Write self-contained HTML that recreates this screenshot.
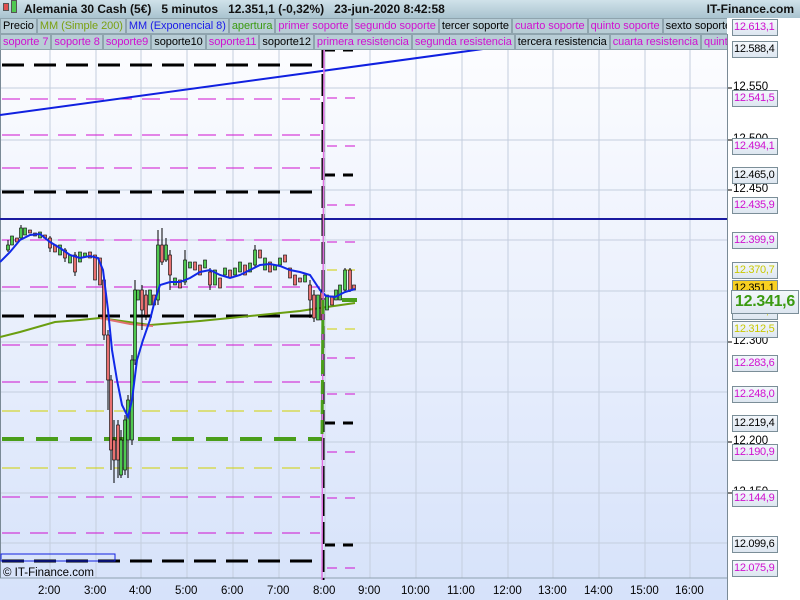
<!DOCTYPE html>
<html><head><meta charset="utf-8"><style>
*{margin:0;padding:0;box-sizing:border-box}
body{width:800px;height:600px;overflow:hidden;font-family:"Liberation Sans",sans-serif;background:#fff;position:relative}
#hdr{position:absolute;left:0;top:0;width:800px;height:18px;background:linear-gradient(#d0e2ea,#a9c3cf);font-size:12px;font-weight:bold;color:#111;line-height:18px}
.row{position:absolute;left:0;height:16px;width:727px;white-space:nowrap;overflow:hidden;font-size:11px;line-height:15px;letter-spacing:-0.05px}
.row span{display:inline-block;background:#b8cdd6;border:1px solid #8fa4ae;padding:0 2px;height:16px}
.lab{position:absolute;left:732px;width:46px;height:17px;border:1px solid #7b8e98;background:linear-gradient(#f4f8fc,#dde6f0);font-size:11px;line-height:15px;padding-left:1px;letter-spacing:-0.3px;white-space:nowrap;overflow:hidden}
.tk{position:absolute;left:733px;font-size:11.5px;color:#000}
.m{color:#d010d0}.y{color:#c8c800}.k{color:#000}
.t{position:absolute;top:585px;font-size:11.5px;color:#000}
</style></head><body>
<svg width="800" height="600" style="position:absolute;left:0;top:0">
<defs><linearGradient id="bg" x1="0" y1="0" x2="0" y2="1"><stop offset="0" stop-color="#fdfdff"/><stop offset="1" stop-color="#d6e2fa"/></linearGradient></defs>
<rect x="0" y="34" width="727" height="566" fill="url(#bg)"/>
<g stroke="#c4cede" stroke-width="1">
<line x1="50" y1="34" x2="50" y2="578"/><line x1="96" y1="34" x2="96" y2="578"/><line x1="141" y1="34" x2="141" y2="578"/><line x1="187" y1="34" x2="187" y2="578"/><line x1="233" y1="34" x2="233" y2="578"/><line x1="279" y1="34" x2="279" y2="578"/><line x1="325" y1="34" x2="325" y2="578"/><line x1="370" y1="34" x2="370" y2="578"/><line x1="416" y1="34" x2="416" y2="578"/><line x1="462" y1="34" x2="462" y2="578"/><line x1="508" y1="34" x2="508" y2="578"/><line x1="553" y1="34" x2="553" y2="578"/><line x1="599" y1="34" x2="599" y2="578"/><line x1="645" y1="34" x2="645" y2="578"/><line x1="690" y1="34" x2="690" y2="578"/>
<line x1="0" y1="88" x2="727" y2="88"/><line x1="0" y1="140" x2="727" y2="140"/><line x1="0" y1="190" x2="727" y2="190"/><line x1="0" y1="240" x2="727" y2="240"/><line x1="0" y1="291" x2="727" y2="291"/><line x1="0" y1="342" x2="727" y2="342"/><line x1="0" y1="392" x2="727" y2="392"/><line x1="0" y1="442" x2="727" y2="442"/><line x1="0" y1="493" x2="727" y2="493"/><line x1="0" y1="543" x2="727" y2="543"/>
</g>
<line x1="0" y1="578" x2="727" y2="578" stroke="#8fa0b0"/>
<line x1="727.5" y1="34" x2="727.5" y2="600" stroke="#7a8a96"/>
<line x1="0.5" y1="34" x2="0.5" y2="578" stroke="#7a8a96"/>
<g stroke="#d010d0" stroke-width="1" stroke-dasharray="18,10">
<line x1="2" y1="99" x2="320" y2="99"/><line x1="2" y1="135" x2="320" y2="135"/><line x1="2" y1="168" x2="320" y2="168"/><line x1="2" y1="240" x2="320" y2="240"/><line x1="2" y1="287" x2="320" y2="287"/><line x1="2" y1="345" x2="320" y2="345"/><line x1="2" y1="382" x2="320" y2="382"/><line x1="2" y1="497" x2="320" y2="497"/><line x1="2" y1="533" x2="320" y2="533"/>
</g>
<g stroke="#d0d000" stroke-width="1" stroke-dasharray="18,10"><line x1="2" y1="411" x2="320" y2="411"/><line x1="2" y1="468" x2="320" y2="468"/></g>
<g stroke="#000" stroke-width="3" stroke-dasharray="22,10"><line x1="2" y1="65" x2="320" y2="65"/><line x1="2" y1="192" x2="320" y2="192"/><line x1="2" y1="316" x2="320" y2="316"/><line x1="2" y1="561" x2="320" y2="561"/></g>
<line x1="2" y1="439" x2="322" y2="439" stroke="#4a9e1a" stroke-width="4" stroke-dasharray="22,12"/>
<g stroke="#d010d0" stroke-width="1" stroke-dasharray="10,8"><line x1="327" y1="98" x2="358" y2="98"/><line x1="327" y1="146" x2="358" y2="146"/><line x1="327" y1="205" x2="358" y2="205"/><line x1="327" y1="242" x2="358" y2="242"/><line x1="327" y1="358" x2="358" y2="358"/><line x1="327" y1="394" x2="358" y2="394"/><line x1="327" y1="452" x2="358" y2="452"/><line x1="327" y1="498" x2="358" y2="498"/><line x1="327" y1="568" x2="358" y2="568"/></g>
<g stroke="#d0d000" stroke-width="1" stroke-dasharray="10,8"><line x1="327" y1="270" x2="358" y2="270"/><line x1="327" y1="329" x2="358" y2="329"/></g>
<g stroke="#000" stroke-width="3" stroke-dasharray="10,8"><line x1="325" y1="50" x2="358" y2="50"/><line x1="325" y1="175" x2="358" y2="175"/><line x1="325" y1="423" x2="358" y2="423"/><line x1="325" y1="545" x2="358" y2="545"/></g>
<line x1="342" y1="300" x2="357" y2="300" stroke="#4a9e1a" stroke-width="4"/>
<line x1="0" y1="115" x2="505" y2="46" stroke="#1020e0" stroke-width="2"/>
<line x1="0" y1="219" x2="727" y2="219" stroke="#1a1aa0" stroke-width="2"/>
<rect x="1" y="554" width="114" height="7" fill="none" stroke="#1020e0"/>
<polyline fill="none" stroke="#6a9e10" stroke-width="2" points="0,337 20,332 55,322 80,320 100,318 150,325 200,321 250,316 300,311 320,308 355,303"/>
<polyline fill="none" stroke="#e07070" stroke-width="2" points="100,318 130,324 153,326"/>
<g stroke="#000" stroke-width="1">
<line x1="8" y1="240" x2="8" y2="252"/><line x1="21" y1="225" x2="21" y2="240"/><line x1="50" y1="236" x2="50" y2="252"/><line x1="65" y1="248" x2="65" y2="262"/><line x1="75" y1="252" x2="75" y2="276"/><line x1="104" y1="275" x2="104" y2="340"/><line x1="108" y1="330" x2="108" y2="410"/><line x1="111" y1="375" x2="111" y2="470"/><line x1="114" y1="420" x2="114" y2="483"/><line x1="118" y1="420" x2="118" y2="478"/><line x1="121" y1="430" x2="121" y2="478"/><line x1="125" y1="415" x2="125" y2="475"/><line x1="128" y1="395" x2="128" y2="478"/><line x1="132" y1="355" x2="132" y2="445"/><line x1="135" y1="280" x2="135" y2="365"/><line x1="142" y1="285" x2="142" y2="330"/><line x1="146" y1="290" x2="146" y2="320"/><line x1="158" y1="230" x2="158" y2="305"/><line x1="162" y1="228" x2="162" y2="265"/><line x1="166" y1="238" x2="166" y2="262"/><line x1="170" y1="250" x2="170" y2="290"/><line x1="185" y1="250" x2="185" y2="285"/><line x1="210" y1="268" x2="210" y2="290"/><line x1="255" y1="245" x2="255" y2="268"/><line x1="310" y1="280" x2="310" y2="318"/><line x1="314" y1="290" x2="314" y2="322"/><line x1="322" y1="285" x2="322" y2="330"/><line x1="345" y1="268" x2="345" y2="292"/><line x1="350" y1="268" x2="350" y2="292"/>
</g>
<g stroke="#000" stroke-width="0.6" fill="#4fc84f">
<rect x="6.5" y="245" width="3" height="5"/><rect x="10.5" y="236" width="3" height="9"/><rect x="19.5" y="228" width="3" height="10"/><rect x="23.5" y="228" width="3" height="7"/><rect x="38.5" y="232" width="3" height="6"/><rect x="58.5" y="245" width="3" height="10"/><rect x="68.5" y="255" width="3" height="8"/><rect x="78.5" y="252" width="3" height="10"/><rect x="83.5" y="253" width="3" height="4"/><rect x="119.5" y="440" width="3" height="35"/><rect x="123.5" y="420" width="3" height="50"/><rect x="126.5" y="400" width="3" height="40"/><rect x="130.5" y="360" width="3" height="80"/><rect x="133.5" y="290" width="3" height="70"/><rect x="136.5" y="290" width="3" height="10"/><rect x="148.5" y="290" width="3" height="15"/><rect x="156.5" y="245" width="3" height="55"/><rect x="164.5" y="245" width="3" height="15"/><rect x="173.5" y="278" width="3" height="7"/><rect x="183.5" y="260" width="3" height="22"/><rect x="188.5" y="262" width="3" height="6"/><rect x="203.5" y="260" width="3" height="8"/><rect x="213.5" y="270" width="3" height="15"/><rect x="223.5" y="268" width="3" height="7"/><rect x="233.5" y="268" width="3" height="7"/><rect x="238.5" y="262" width="3" height="10"/><rect x="248.5" y="263" width="3" height="9"/><rect x="253.5" y="250" width="3" height="15"/><rect x="263.5" y="258" width="3" height="12"/><rect x="273.5" y="265" width="3" height="5"/><rect x="278.5" y="258" width="3" height="7"/><rect x="303.5" y="275" width="3" height="7"/><rect x="316.5" y="295" width="3" height="25"/><rect x="325.5" y="295" width="3" height="15"/><rect x="334.5" y="290" width="3" height="10"/><rect x="338.5" y="285" width="3" height="15"/><rect x="343.5" y="270" width="3" height="20"/>
</g>
<g stroke="#000" stroke-width="0.6" fill="#e87070">
<rect x="15.5" y="238" width="3" height="4"/><rect x="28.5" y="230" width="3" height="3"/><rect x="33.5" y="233" width="3" height="3"/><rect x="43.5" y="235" width="3" height="3"/><rect x="48.5" y="238" width="3" height="10"/><rect x="53.5" y="245" width="3" height="7"/><rect x="63.5" y="250" width="3" height="8"/><rect x="73.5" y="255" width="3" height="17"/><rect x="88.5" y="252" width="3" height="6"/><rect x="93.5" y="255" width="3" height="25"/><rect x="98.5" y="258" width="3" height="27"/><rect x="102.5" y="280" width="3" height="55"/><rect x="106.5" y="335" width="3" height="45"/><rect x="109.5" y="380" width="3" height="70"/><rect x="112.5" y="440" width="3" height="20"/><rect x="116.5" y="425" width="3" height="35"/><rect x="140.5" y="290" width="3" height="20"/><rect x="144.5" y="295" width="3" height="20"/><rect x="152.5" y="295" width="3" height="10"/><rect x="160.5" y="245" width="3" height="17"/><rect x="168.5" y="255" width="3" height="20"/><rect x="178.5" y="280" width="3" height="8"/><rect x="193.5" y="262" width="3" height="8"/><rect x="198.5" y="265" width="3" height="10"/><rect x="208.5" y="272" width="3" height="13"/><rect x="218.5" y="278" width="3" height="10"/><rect x="228.5" y="270" width="3" height="8"/><rect x="243.5" y="265" width="3" height="10"/><rect x="258.5" y="250" width="3" height="8"/><rect x="268.5" y="262" width="3" height="10"/><rect x="283.5" y="255" width="3" height="7"/><rect x="288.5" y="268" width="3" height="10"/><rect x="293.5" y="275" width="3" height="10"/><rect x="298.5" y="278" width="3" height="4"/><rect x="308.5" y="285" width="3" height="15"/><rect x="312.5" y="295" width="3" height="23"/><rect x="320.5" y="290" width="3" height="30"/><rect x="330.5" y="296" width="3" height="9"/><rect x="348.5" y="270" width="3" height="20"/><rect x="352.5" y="285" width="3" height="5"/>
</g>
<polyline fill="none" stroke="#1028e8" stroke-width="2" points="0,262 10,252 20,240 30,235 40,234 50,242 60,248 70,255 80,258 90,256 98,258 103,270 108,310 112,350 117,380 122,405 128,417 132,400 137,360 143,340 150,320 155,300 160,285 170,282 180,282 190,278 200,272 210,270 220,275 230,278 240,275 250,270 260,265 270,264 280,266 290,270 300,272 310,275 320,290 326,296 335,297 345,292 355,289"/>
<line x1="323" y1="46" x2="323" y2="580" stroke="#000" stroke-width="3" stroke-dasharray="22,6"/>
<line x1="324" y1="46" x2="322" y2="580" stroke="#e070e0" stroke-width="1.5"/>
<line x1="323" y1="300" x2="322" y2="440" stroke="#4a9e1a" stroke-width="3" stroke-dasharray="14,6"/>
<g stroke="#000"><line x1="728" y1="88" x2="732" y2="88"/><line x1="728" y1="140" x2="732" y2="140"/><line x1="728" y1="190" x2="732" y2="190"/><line x1="728" y1="342" x2="732" y2="342"/><line x1="728" y1="442" x2="732" y2="442"/><line x1="728" y1="493" x2="732" y2="493"/></g>
</svg>
<div id="hdr"><span style="position:absolute;left:3px;top:3px;width:6px;height:8px;background:#e05050;border:1px solid #555"></span><span style="position:absolute;left:11px;top:0px;width:6px;height:13px;background:#50c850;border:1px solid #555"></span><span style="position:absolute;left:24px">Alemania 30 Cash (5€)&nbsp;&nbsp;&nbsp;5 minutos&nbsp;&nbsp;&nbsp;12.351,1 (-0,32%)&nbsp;&nbsp;&nbsp;23-jun-2020 8:42:58</span><span style="position:absolute;right:6px">IT-Finance.com</span></div>
<div class="row" style="top:18px"><span class="k">Precio</span><span style="color:#7aa010">MM (Simple 200)</span><span style="color:#1a1ae8">MM (Exponencial 8)</span><span style="color:#3a9a10">apertura</span><span class="m">primer soporte</span><span class="m">segundo soporte</span><span class="k">tercer soporte</span><span class="m">cuarto soporte</span><span class="m">quinto soporte</span><span class="k">sexto soporte</span></div>
<div class="row" style="top:34px"><span class="m">soporte 7</span><span class="m">soporte 8</span><span class="m">soporte9</span><span class="k">soporte10</span><span class="m">soporte11</span><span class="k">soporte12</span><span class="m">primera resistencia</span><span class="m">segunda resistencia</span><span class="k">tercera resistencia</span><span class="m">cuarta resistencia</span><span class="m">quinta resistencia</span></div>
<div class="tk" style="top:81px">12.550</div><div class="tk" style="top:133px">12.500</div><div class="tk" style="top:183px">12.450</div><div class="tk" style="top:335px">12.300</div><div class="tk" style="top:435px">12.200</div><div class="tk" style="top:486px">12.150</div>
<div class="lab m" style="top:19px">12.613,1</div>
<div class="lab k" style="top:41px">12.588,4</div>
<div class="lab m" style="top:90px">12.541,5</div>
<div class="lab m" style="top:138px">12.494,1</div>
<div class="lab k" style="top:167px">12.465,0</div>
<div class="lab m" style="top:197px">12.435,9</div>
<div class="lab m" style="top:232px">12.399,9</div>
<div class="lab y" style="top:262px">12.370,7</div>
<div class="lab k" style="top:280px;background:#f8d020">12.351,1</div>
<div class="lab y" style="top:303px">12.336,6</div>
<div class="lab y" style="top:321px">12.312,5</div>
<div class="lab m" style="top:355px">12.283,6</div>
<div class="lab m" style="top:386px">12.248,0</div>
<div class="lab k" style="top:415px">12.219,4</div>
<div class="lab m" style="top:444px">12.190,9</div>
<div class="lab m" style="top:490px">12.144,9</div>
<div class="lab k" style="top:536px">12.099,6</div>
<div class="lab m" style="top:560px">12.075,9</div>
<div style="position:absolute;left:731px;top:290px;width:68px;height:24px;border:1px solid #7b8e98;background:linear-gradient(#f4f8fc,#dde6f0);color:#3a9a10;font-weight:bold;font-size:16px;line-height:22px;text-align:center;letter-spacing:-0.3px;white-space:nowrap">12.341,6</div>
<div style="position:absolute;left:3px;top:567px;font-size:11.5px;color:#000">© IT-Finance.com</div>
<div class="t" style="left:38px">2:00</div><div class="t" style="left:84px">3:00</div><div class="t" style="left:129px">4:00</div><div class="t" style="left:175px">5:00</div><div class="t" style="left:221px">6:00</div><div class="t" style="left:267px">7:00</div><div class="t" style="left:313px">8:00</div><div class="t" style="left:358px">9:00</div><div class="t" style="left:401px">10:00</div><div class="t" style="left:447px">11:00</div><div class="t" style="left:493px">12:00</div><div class="t" style="left:538px">13:00</div><div class="t" style="left:584px">14:00</div><div class="t" style="left:630px">15:00</div><div class="t" style="left:675px">16:00</div>
</body></html>
